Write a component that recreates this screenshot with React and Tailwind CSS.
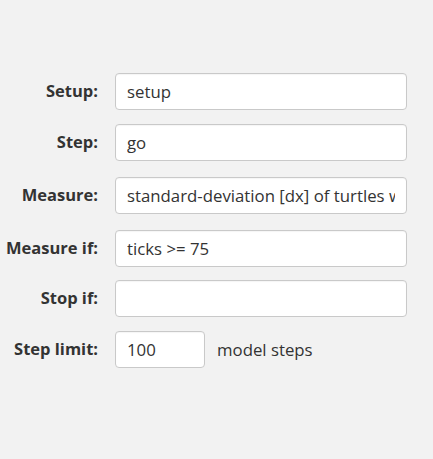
import React from "react";

const rows = [
  { label: "Setup:", value: "setup", mt: "mt-0" },
  { label: "Step:", value: "go", mt: "mt-[14px]" },
  { label: "Measure:", value: "standard-deviation [dx] of turtles with [color = red]", mt: "mt-[16px]" },
  { label: "Measure if:", value: "ticks >= 75", mt: "mt-[16px]" },
  { label: "Stop if:", value: "", mt: "mt-[13px]" },
];

const inputCls =
  "h-[37px] rounded-[4px] border border-[#c9c9c9] bg-white px-[11px] text-[16.8px] text-[#333] outline-none shadow-[inset_0_1px_1px_rgba(0,0,0,0.04)]";

export default function App() {
  return (
    <div
      className="min-h-[459px] w-full bg-[#f2f2f2] pt-[73px] text-[#333]"
      style={{ fontFamily: '"Open Sans", "Noto Sans", sans-serif' }}
    >
      <div className="flex flex-col">
        {rows.map((row) => (
          <div key={row.label} className={`flex items-center ${row.mt}`}>
            <label className="w-[98px] shrink-0 whitespace-nowrap text-right text-[16.5px] font-bold">{row.label}</label>
            <input
              readOnly
              value={row.value}
              className={`${inputCls} ml-[17px] w-[292px]`}
            />
          </div>
        ))}
        <div className="mt-[14px] flex items-center">
          <label className="w-[98px] shrink-0 whitespace-nowrap text-right text-[16.5px] font-bold">Step limit:</label>
          <input readOnly value="100" className={`${inputCls} ml-[17px] w-[90px]`} />
          <span className="ml-[12px] text-[16.8px]">model steps</span>
        </div>
      </div>
    </div>
  );
}
